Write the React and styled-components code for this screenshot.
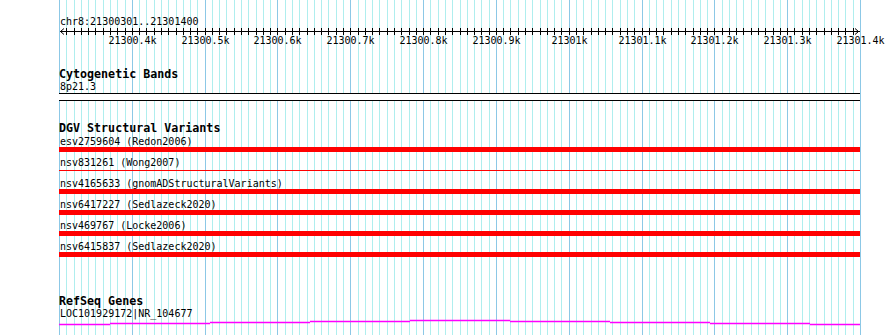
import React from "react";
import styled, { createGlobalStyle } from "styled-components";

const MONO = '"DejaVu Sans Mono", "Liberation Mono", monospace';

const GlobalStyle = createGlobalStyle`
  html, body {
    margin: 0;
    padding: 0;
    background: #fff;
  }
  body {
    font-family: ${MONO};
    color: #000;
  }
`;

const START = 21300300;
const END = 21301400;
const LEFT = 59;
const SPAN = 801;
const px = (bp) => Math.round(LEFT + ((bp - START) * SPAN) / (END - START));

const ticks = Array.from({ length: 111 }, (_, i) => START + i * 10);
const majors = ticks.filter((bp) => bp % 100 === 0 && bp > START);

const variants = [
  { name: "esv2759604 (Redon2006)" },
  { name: "nsv831261 (Wong2007)", thin: true },
  { name: "nsv4165633 (gnomADStructuralVariants)" },
  { name: "nsv6417227 (Sedlazeck2020)" },
  { name: "nsv469767 (Locke2006)" },
  { name: "nsv6415837 (Sedlazeck2020)" },
];

// intron line of the gene, stepping up to the middle and back down
const geneSteps = [
  [0, 51, 5],
  [51, 151, 4],
  [151, 251, 3],
  [251, 351, 2],
  [351, 451, 1],
  [451, 551, 2],
  [551, 651, 3],
  [651, 751, 4],
  [751, 801, 5],
];

const Page = styled.div`
  position: relative;
  width: 890px;
  height: 335px;
  overflow: hidden;
`;

const Grid = styled.svg`
  position: absolute;
  top: 0;
  left: 0;
`;

const Tracks = styled.div`
  position: relative;
  padding: 16px 0 0 ${LEFT}px;
`;

const Location = styled.div`
  font-size: 10px;
  line-height: 12px;
  height: 12px;
  padding-left: 1px;
  white-space: nowrap;
`;

const Ruler = styled.svg`
  display: block;
  overflow: visible;
`;

const TrackTitle = styled.div`
  margin-top: ${(p) => p.$gap}px;
  font-size: 11.67px;
  font-weight: bold;
  line-height: 13px;
  height: 13px;
  white-space: nowrap;
`;

const FeatureLabel = styled.div`
  font-size: 10px;
  line-height: 11px;
  height: 11px;
  padding-left: 1px;
  white-space: nowrap;
`;

const BandLabel = styled(FeatureLabel)`
  line-height: 12px;
  height: 12px;
`;

const Band = styled.div`
  box-sizing: border-box;
  width: ${SPAN}px;
  height: 8px;
  background: #fff;
  border-top: 1px solid #000;
  border-bottom: 1px solid #000;
`;

const VariantList = styled.div`
  display: flex;
  flex-direction: column;
  gap: 5px;
  padding-top: 1px;
`;

const Bar = styled.div`
  width: ${SPAN}px;
  height: 5px;
  display: flex;
  align-items: center;
  &::before {
    content: "";
    display: block;
    width: 100%;
    height: ${(p) => (p.$thin ? 1 : 5)}px;
    background: #ff0000;
  }
`;

const Gene = styled.svg`
  display: block;
`;

export default function App() {
  return (
    <>
      <GlobalStyle />
      <Page>
        <Grid width="890" height="335">
          {ticks.map((bp) => (
            <rect
              key={bp}
              x={px(bp)}
              y="0"
              width="1"
              height="335"
              fill={bp % 100 === 0 ? "#8cc8e6" : "#afeeee"}
            />
          ))}
        </Grid>
        <Tracks>
          <Location>chr8:21300301..21301400</Location>
          <Ruler width="831" height="20">
            <rect x="1" y="3" width={SPAN - 1} height="1" fill="#000" />
            <path d="M5 0.5 L1.5 3.5 L5 6.5" fill="none" stroke="#000" strokeWidth="1" />
            <path
              d={`M${SPAN - 5} 0.5 L${SPAN - 1.5} 3.5 L${SPAN - 5} 6.5`}
              fill="none"
              stroke="#000"
              strokeWidth="1"
            />
            {ticks.slice(1, -1).map((bp) => (
              <rect key={bp} x={px(bp) - LEFT} y="0" width="1" height="7" fill="#000" />
            ))}
            {majors.map((bp) => (
              <text
                key={bp}
                x={px(bp) - LEFT + 0.5}
                y="15.5"
                fontSize="10"
                textAnchor="middle"
                fontFamily={MONO}
              >
                {`${bp / 1000}k`}
              </text>
            ))}
          </Ruler>

          <TrackTitle $gap={20}>Cytogenetic Bands</TrackTitle>
          <BandLabel>8p21.3</BandLabel>
          <Band />

          <TrackTitle $gap={21}>DGV Structural Variants</TrackTitle>
          <VariantList>
            {variants.map((v) => (
              <div key={v.name}>
                <FeatureLabel>{v.name}</FeatureLabel>
                <Bar $thin={v.thin} />
              </div>
            ))}
          </VariantList>

          <TrackTitle $gap={38}>RefSeq Genes</TrackTitle>
          <FeatureLabel>LOC101929172|NR_104677</FeatureLabel>
          <Gene width={SPAN} height="8">
            {geneSteps.map(([x1, x2, y]) => (
              <line
                key={x1}
                x1={x1}
                x2={x2}
                y1={y + 0.5}
                y2={y + 0.5}
                stroke="#ff00ff"
                strokeWidth="1.5"
              />
            ))}
          </Gene>
        </Tracks>
      </Page>
    </>
  );
}
